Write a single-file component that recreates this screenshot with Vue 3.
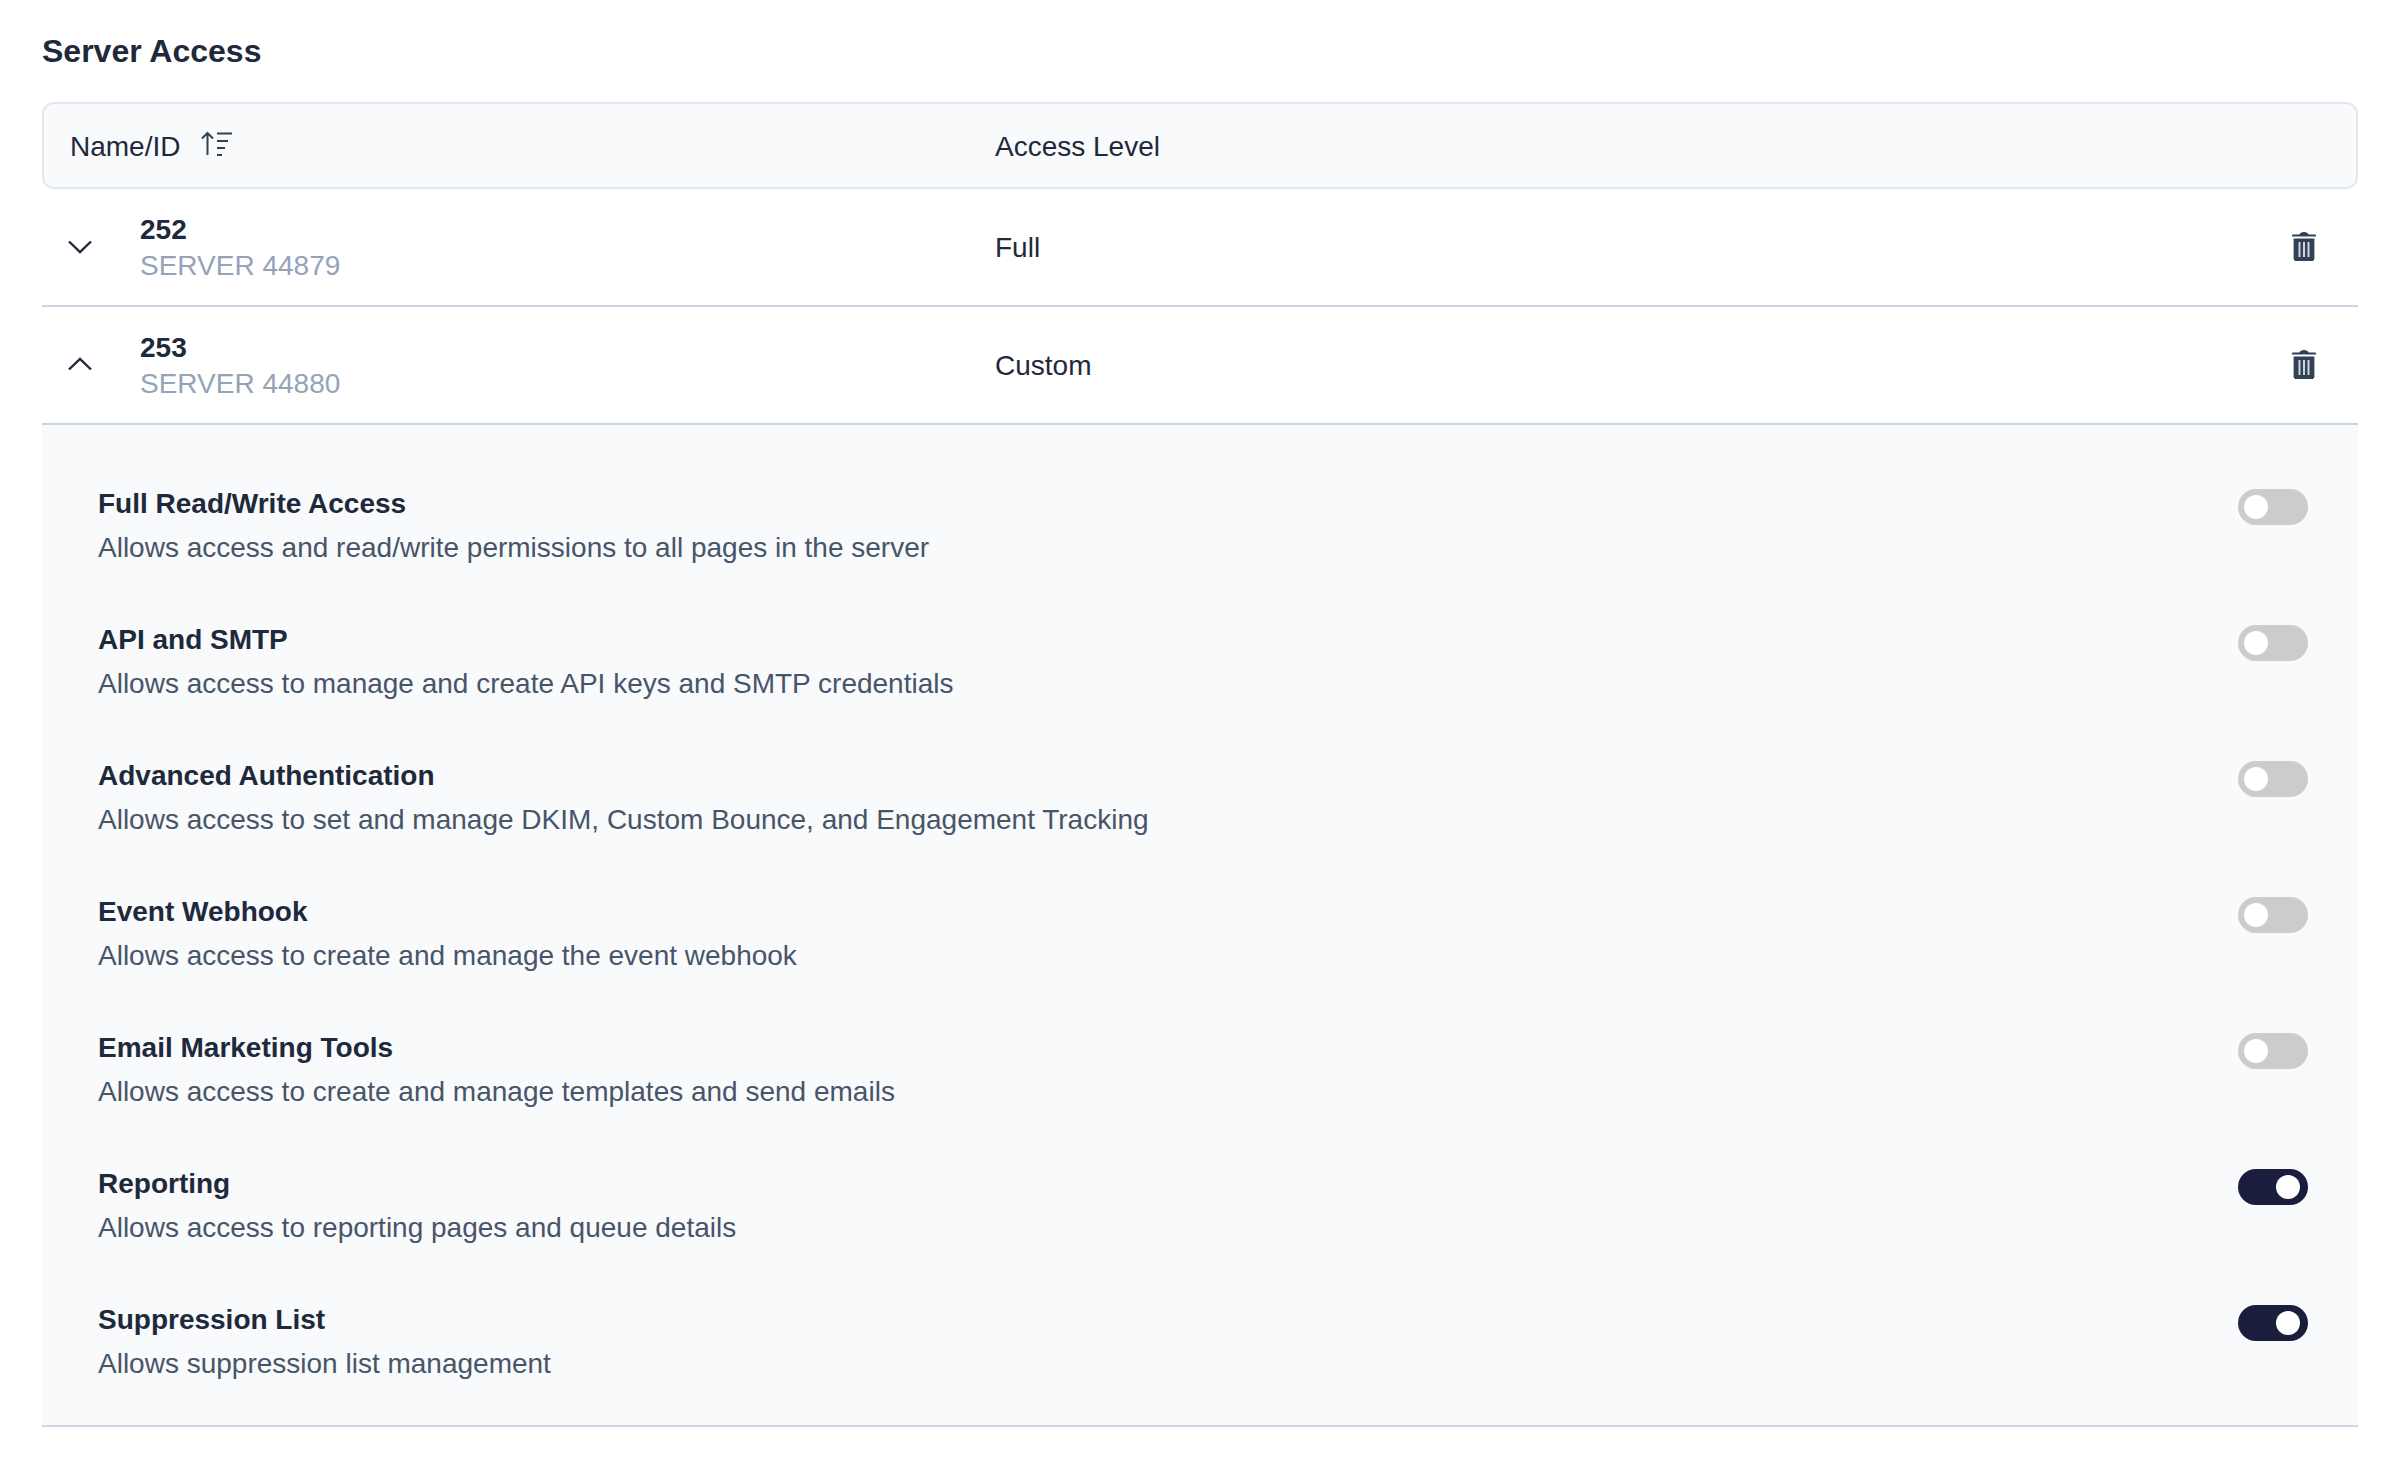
<script setup>
const perms = [
  { title: 'Full Read/Write Access', desc: 'Allows access and read/write permissions to all pages in the server', on: false },
  { title: 'API and SMTP', desc: 'Allows access to manage and create API keys and SMTP credentials', on: false },
  { title: 'Advanced Authentication', desc: 'Allows access to set and manage DKIM, Custom Bounce, and Engagement Tracking', on: false },
  { title: 'Event Webhook', desc: 'Allows access to create and manage the event webhook', on: false },
  { title: 'Email Marketing Tools', desc: 'Allows access to create and manage templates and send emails', on: false },
  { title: 'Reporting', desc: 'Allows access to reporting pages and queue details', on: true },
  { title: 'Suppression List', desc: 'Allows suppression list management', on: true },
]
const rows = [
  { id: '252', name: 'SERVER 44879', level: 'Full', open: false },
  { id: '253', name: 'SERVER 44880', level: 'Custom', open: true },
]
</script>

<template>
  <div class="page">
    <h2 class="title">Server Access</h2>
    <div class="head">
      <div class="head-name">
        <span>Name/ID</span>
        <svg class="sort" width="32" height="26" viewBox="0 0 32 26" fill="none" stroke="#334155" stroke-width="2">
          <path d="M7.5 24V2M2 7.500 7.500 2 13 7.500" />
          <path d="M17 2.500h15M17 10h11M17 17h8M17 24h5" />
        </svg>
      </div>
      <div>Access Level</div>
    </div>
    <div v-for="row in rows" :key="row.id" class="row">
      <div class="chev" :class="{ open: row.open }">
        <svg width="24" height="14" viewBox="0 0 24 14" fill="none" stroke="#1e293b" stroke-width="2.400">
          <path v-if="row.open" d="M1 12.500 12 1.800 23 12.500" />
          <path v-else d="M1 1.500 12 12.200 23 1.500" />
        </svg>
      </div>
      <div class="name">
        <div class="id">{{ row.id }}</div>
        <div class="server">{{ row.name }}</div>
      </div>
      <div class="level">{{ row.level }}</div>
      <svg class="trash" width="24" height="29" viewBox="0 0 24 29">
        <path fill="#334155" d="M0 3.400C0 2.800.4 2.400 1 2.400h6.400C8 .9 9.500 0 12 0s4 .9 4.600 2.400H23c.6 0 1 .4 1 1v1.200H0zM1.600 6.400h20.800v20c0 1.400-1.100 2.600-2.600 2.600H4.200c-1.500 0-2.600-1.200-2.600-2.600z" />
        <path fill="#cbd5e1" d="M6.500 10h2v15h-2zM11 10h2v15h-2zM15.500 10h2v15h-2z" />
      </svg>
    </div>
    <div class="panel">
      <div v-for="p in perms" :key="p.title" class="perm">
        <div>
          <div class="perm-title">{{ p.title }}</div>
          <div class="perm-desc">{{ p.desc }}</div>
        </div>
        <span class="toggle" :class="{ on: p.on }"><span class="knob"></span></span>
      </div>
    </div>
  </div>
</template>

<style>
html, body { margin: 0; background: #fff; }
</style>

<style scoped>
.page {
  padding: 32px 46px 0 42px;
  font-family: "Liberation Sans", Arial, sans-serif;
  font-size: 28px;
  line-height: 36px;
  color: #0f172a;
}
.title {
  margin: 0 0 32px;
  font-size: 32px;
  line-height: 38px;
  font-weight: 700;
  color: #1e293b;
}
.head {
  height: 87px;
  box-sizing: border-box;
  display: grid;
  grid-template-columns: 925px 1fr;
  align-items: center;
  padding: 2px 0 0 26px;
  background: #f8fafc;
  border: 2px solid #e2e8f0;
  border-radius: 12px;
  color: #1e293b;
}
.head-name { display: flex; align-items: center; gap: 20px; }
.sort { margin-top: -5px; }
.row {
  height: 118px;
  box-sizing: border-box;
  display: grid;
  grid-template-columns: 72px 855px 1fr 24px;
  align-items: center;
  padding: 0 42px 0 26px;
  border-bottom: 2px solid #cbd5e1;
}
.chev { display: flex; }
.chev.open { margin-top: -3px; }
.name { padding-top: 2px; }
.id { font-weight: 700; color: #1e293b; }
.server { color: #94a3b8; }
.level { color: #1e293b; margin-top: 1px; }
.trash { margin-top: -2px; }
.panel {
  background: #f8fafc;
  border-bottom: 2px solid #cbd5e1;
  display: flex;
  flex-direction: column;
  gap: 56px;
  padding: 61px 50px 43px 56px;
}
.perm {
  display: flex;
  justify-content: space-between;
  align-items: flex-start;
}
.perm-title { font-weight: 700; color: #1e293b; margin-bottom: 8px; }
.perm-desc { color: #475569; }
.toggle {
  width: 70px;
  height: 36px;
  margin-top: 3px;
  border-radius: 18px;
  background: #ccc;
  display: flex;
  align-items: center;
  padding: 0 6px;
  box-sizing: border-box;
}
.toggle.on { background: #1a1e3c; justify-content: flex-end; padding-right: 8px; }
.knob { width: 24px; height: 24px; border-radius: 50%; background: #fff; }
</style>
